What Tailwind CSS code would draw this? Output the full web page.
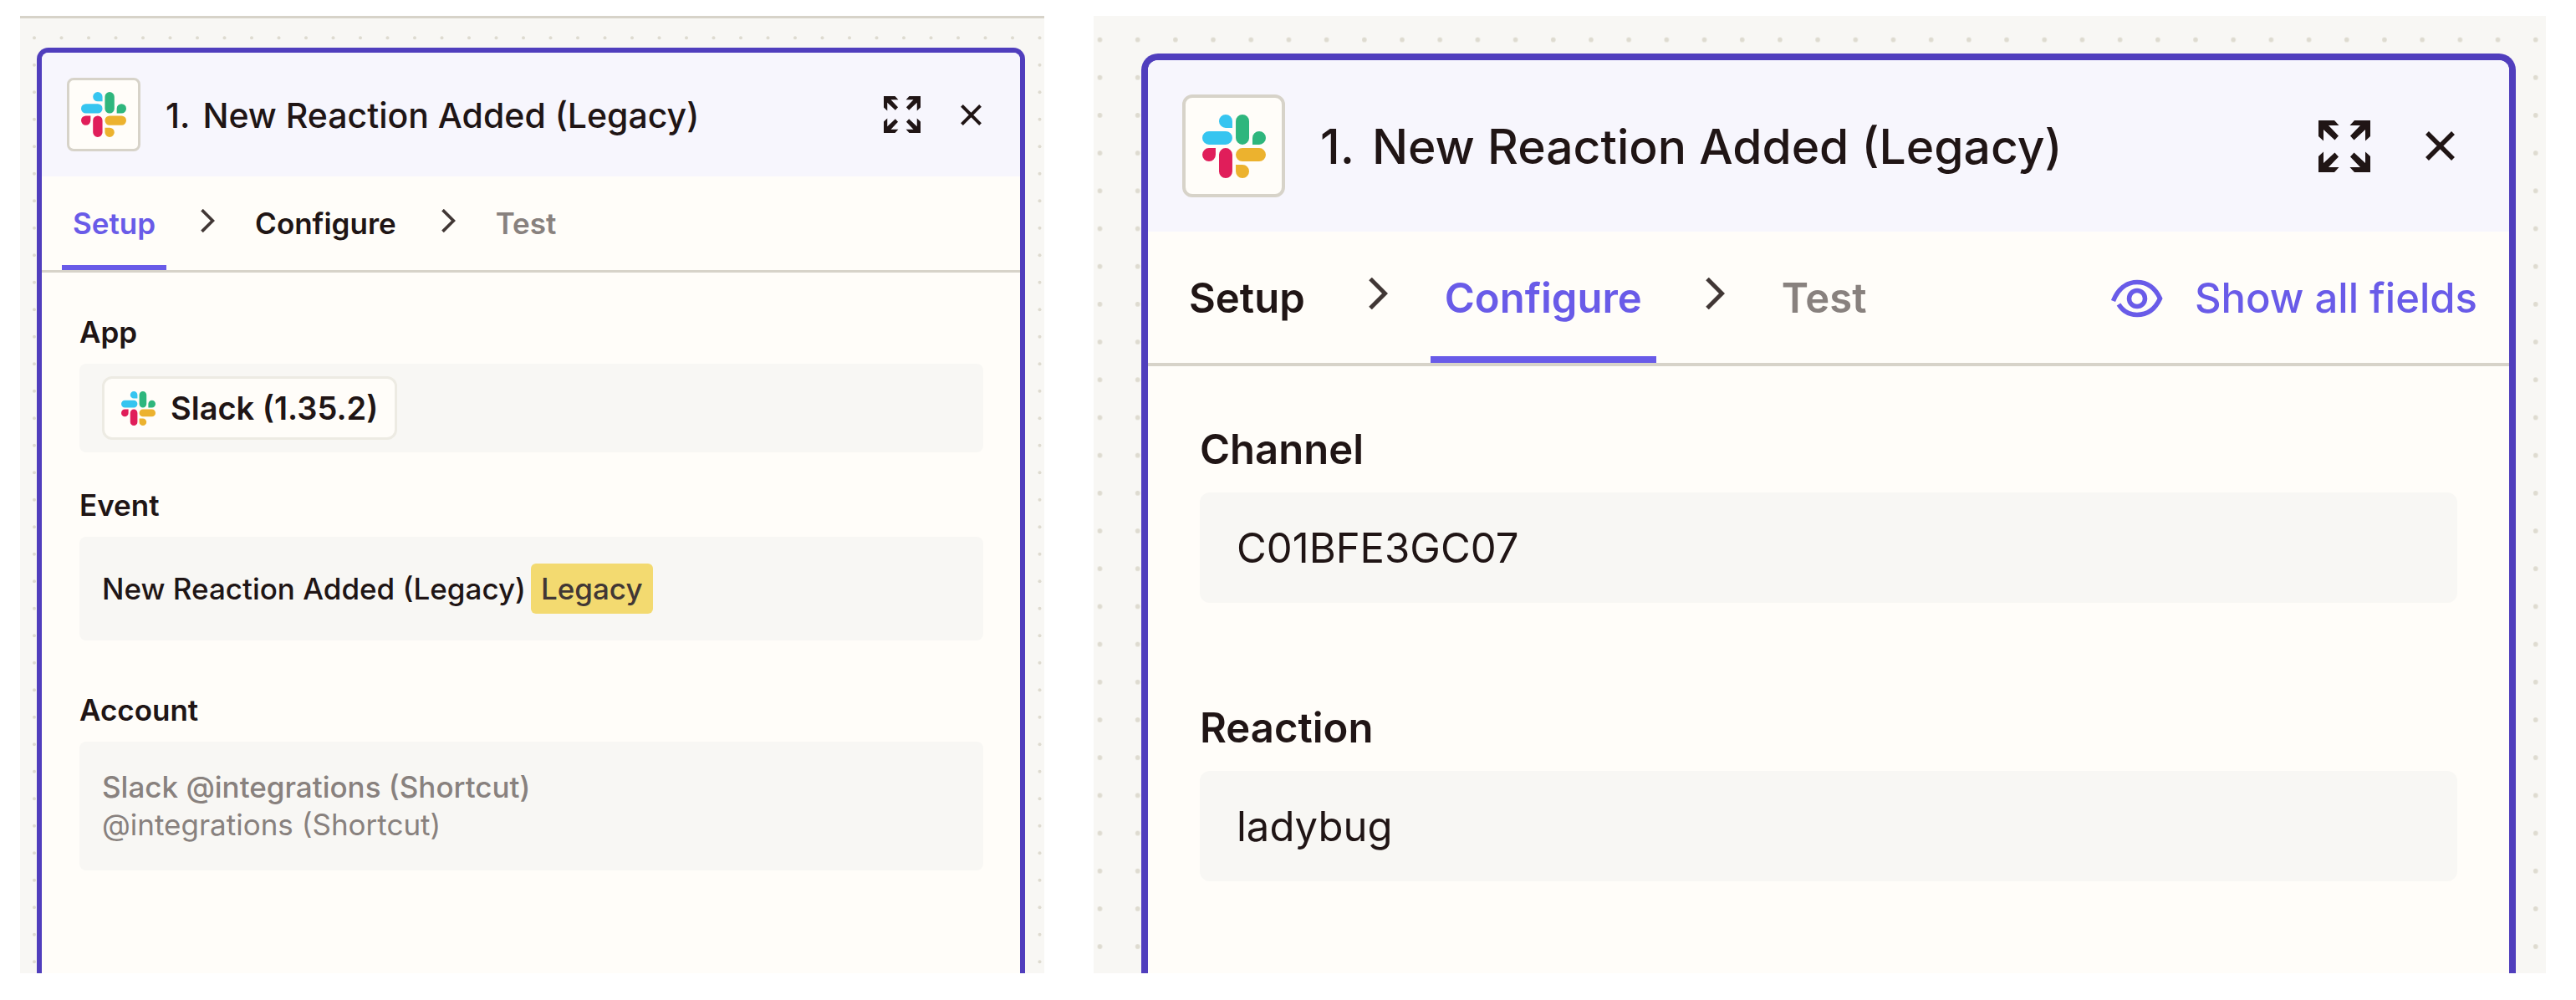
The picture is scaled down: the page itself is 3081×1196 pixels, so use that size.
<!DOCTYPE html>
<html lang="en">
<head>
<meta charset="utf-8">
<meta name="viewport" content="width=device-width, initial-scale=1">
<title>Zap step setup</title>
<script src="https://cdn.jsdelivr.net/npm/@tailwindcss/browser@4"></script>
</head>
<body class="bg-white font-['Inter',sans-serif] text-[#201515] antialiased">
<svg class="hidden" aria-hidden="true">
  <symbol id="slack" viewBox="0 0 24 24">
    <path fill="#e01e5a" d="M5.042 15.165a2.528 2.528 0 0 1-2.52 2.523A2.528 2.528 0 0 1 0 15.165a2.527 2.527 0 0 1 2.522-2.52h2.52v2.52zM6.313 15.165a2.527 2.527 0 0 1 2.521-2.52 2.527 2.527 0 0 1 2.521 2.52v6.313A2.528 2.528 0 0 1 8.834 24a2.528 2.528 0 0 1-2.521-2.522v-6.313z"/>
    <path fill="#36c5f0" d="M8.834 5.042a2.528 2.528 0 0 1-2.521-2.52A2.528 2.528 0 0 1 8.834 0a2.528 2.528 0 0 1 2.521 2.522v2.52H8.834zM8.834 6.313a2.528 2.528 0 0 1 2.521 2.521 2.528 2.528 0 0 1-2.521 2.521H2.522A2.528 2.528 0 0 1 0 8.834a2.528 2.528 0 0 1 2.522-2.521h6.312z"/>
    <path fill="#2eb67d" d="M18.956 8.834a2.528 2.528 0 0 1 2.522-2.521A2.528 2.528 0 0 1 24 8.834a2.528 2.528 0 0 1-2.522 2.521h-2.522V8.834zM17.688 8.834a2.528 2.528 0 0 1-2.523 2.521 2.527 2.527 0 0 1-2.52-2.521V2.522A2.527 2.527 0 0 1 15.165 0a2.528 2.528 0 0 1 2.523 2.522v6.312z"/>
    <path fill="#ecb22e" d="M15.165 18.956a2.528 2.528 0 0 1 2.523 2.522A2.528 2.528 0 0 1 15.165 24a2.527 2.527 0 0 1-2.52-2.522v-2.522h2.52zM15.165 17.688a2.527 2.527 0 0 1-2.52-2.523 2.526 2.526 0 0 1 2.52-2.520h6.313A2.527 2.527 0 0 1 24 15.165a2.528 2.528 0 0 1-2.522 2.523h-6.313z"/>
  </symbol>
  <symbol id="expand" viewBox="0 0 62 62">
    <g fill="currentColor">
      <path id="arrow" d="M0 0H19L24.500 6H12L24 18.500L19.500 23.500L6 11V24.500L0 19Z"/>
      <use href="#arrow" transform="matrix(-1 0 0 1 62 0)"/>
      <use href="#arrow" transform="matrix(1 0 0 -1 0 62)"/>
      <use href="#arrow" transform="matrix(-1 0 0 -1 62 62)"/>
    </g>
  </symbol>
  <symbol id="close" viewBox="0 0 35 35">
    <path d="M2 2L33 33M33 2L2 33" fill="none" stroke="currentColor" stroke-width="5.500"/>
  </symbol>
  <symbol id="chevron" viewBox="0 0 23 38">
    <path d="M2 1.500L19.500 19L2 36.500" fill="none" stroke="currentColor" stroke-width="5"/>
  </symbol>
  <symbol id="eye" viewBox="0 0 62 46">
    <g fill="none" stroke="currentColor" stroke-width="5.500">
      <path d="M2.500 26C8 12 18 3.500 31 3.500C44 3.500 53 11 58.500 23C53 35 44 42.500 31 42.500C21 42.500 14 38 9 30"/>
      <circle cx="31" cy="23" r="9.500"/>
    </g>
  </symbol>
</svg>

<main class="grid min-h-screen grid-cols-[minmax(0,1225fr)_minmax(0,1737fr)] gap-[59px] pt-[19px] pr-9 pb-8 pl-6">

  <section class="relative flex flex-col border-t-3 border-[#d7d3c9] bg-[#f8f7f4] pt-[35px] pr-[23px] pl-5" aria-label="Setup step">
    <svg class="absolute inset-0 size-full" aria-hidden="true">
      <pattern id="dots-a" width="65" height="65" x="1" y="7" patternUnits="userSpaceOnUse">
        <g fill="#dedbd0"><circle cx="16" cy="16.250" r="2"/><circle cx="48.500" cy="16.250" r="2"/><circle cx="16" cy="48.750" r="2"/><circle cx="48.500" cy="48.750" r="2"/></g>
      </pattern>
      <rect width="100%" height="100%" fill="url(#dots-a)"/>
    </svg>
    <div class="relative flex grow flex-col overflow-hidden rounded-t-[14px] border-6 border-b-0 border-[#503ebd] bg-[#fffdf9]">
      <header class="flex h-[148px] items-center bg-[#f7f6fd] pr-[46px] pl-[30px]">
        <div class="flex size-[88px] items-center justify-center rounded-lg border-3 border-[#d7d3c9] bg-[#fffdf9]">
          <svg class="size-[54px]"><use href="#slack"/></svg>
        </div>
        <h2 class="ml-[30px] flex grow gap-[15px] pt-0.5 text-[41px] leading-[52px] font-medium"><span>1.</span><span>New Reaction Added (Legacy)</span></h2>
        <button type="button" aria-label="Expand" class="mr-12"><svg class="size-11"><use href="#expand"/></svg></button>
        <button type="button" aria-label="Close"><svg class="size-[25px]"><use href="#close"/></svg></button>
      </header>
      <nav class="flex h-[115px] items-stretch border-b-3 border-[#d7d3c9] pl-6 text-[35px] leading-[45px] font-semibold">
        <button type="button" class="border-b-6 border-[#695be8] px-[13px] pt-1.5 text-[#695be8]">Setup</button>
        <svg class="mt-[39px] ml-[41px] h-7 w-[17px] text-[#413735]"><use href="#chevron"/></svg>
        <button type="button" class="ml-[35px] border-b-6 border-transparent px-[13px] pt-1.5">Configure</button>
        <svg class="mt-[39px] ml-[41px] h-7 w-[17px] text-[#413735]"><use href="#chevron"/></svg>
        <button type="button" class="ml-[35px] border-b-6 border-transparent px-[13px] pt-1.5 text-[#88817e]">Test</button>
      </nav>
      <div class="flex flex-col pt-[49px] pr-11 pl-[45px] text-[35px] leading-[45px]">
        <h3 class="font-semibold">App</h3>
        <div class="mt-[15px] flex h-[106px] items-center rounded-lg bg-[#f8f7f4] pl-[27px]">
          <button type="button" class="flex h-[76px] items-center gap-[18px] rounded-xl border-3 border-[#edebe3] bg-[#fffdf9] px-5 text-[38px] font-semibold"><svg class="size-[41px]"><use href="#slack"/></svg>Slack (1.35.2)</button>
        </div>
        <h3 class="mt-[41px] font-semibold">Event</h3>
        <div class="mt-[15px] flex h-[124px] items-center gap-1.5 rounded-lg bg-[#f8f7f4] pl-[27px] font-medium">
          <span>New Reaction Added (Legacy)</span>
          <span class="flex h-[60px] items-center rounded-md bg-[#f3da70] px-3 text-[#413735]">Legacy</span>
        </div>
        <h3 class="mt-[61px] font-semibold">Account</h3>
        <div class="mt-[15px] rounded-lg bg-[#f8f7f4] px-[27px] py-8 text-[#88817e]">
          <p class="font-medium">Slack @integrations (Shortcut)</p>
          <p>@integrations (Shortcut)</p>
        </div>
      </div>
    </div>
  </section>

  <section class="relative flex flex-col bg-[#f8f7f4] pt-[45px] pr-9 pl-[57px]" aria-label="Configure step">
    <svg class="absolute inset-0 size-full" aria-hidden="true">
      <pattern id="dots-b" width="45.190" height="45.190" x="-15" y="6" patternUnits="userSpaceOnUse">
        <circle cx="22.500" cy="22.500" r="2.800" fill="#dedbd0"/>
      </pattern>
      <rect width="100%" height="100%" fill="url(#dots-b)"/>
    </svg>
    <div class="relative flex grow flex-col overflow-hidden rounded-t-[20px] border-8 border-b-0 border-[#503ebd] bg-[#fffdf9]">
      <header class="flex h-[205px] items-center bg-[#f7f6fd] pr-[65px] pl-[41px]">
        <div class="flex size-[123px] items-center justify-center rounded-xl border-4 border-[#d7d3c9] bg-[#fffdf9]">
          <svg class="size-[76px]"><use href="#slack"/></svg>
        </div>
        <h2 class="ml-[42px] flex grow gap-[21px] pt-0.5 text-[57px] leading-[72px] font-medium"><span>1.</span><span>New Reaction Added (Legacy)</span></h2>
        <button type="button" aria-label="Expand" class="mr-[66px]"><svg class="size-[62px]"><use href="#expand"/></svg></button>
        <button type="button" aria-label="Close"><svg class="size-[35px]"><use href="#close"/></svg></button>
      </header>
      <nav class="flex h-[161px] items-stretch border-b-4 border-[#d7d3c9] pr-[38px] pl-8 text-[49px] leading-[62px] font-semibold">
        <button type="button" class="border-b-8 border-transparent px-[17px] pt-2.5">Setup</button>
        <svg class="mt-[55px] ml-[59px] h-[38px] w-[23px] text-[#413735]"><use href="#chevron"/></svg>
        <button type="button" class="ml-[51px] border-b-8 border-[#695be8] px-[17px] pt-2.5 text-[#695be8]">Configure</button>
        <svg class="mt-[55px] ml-[59px] h-[38px] w-[23px] text-[#413735]"><use href="#chevron"/></svg>
        <button type="button" class="ml-[51px] border-b-8 border-transparent px-[17px] pt-2.5 text-[#88817e]">Test</button>
        <button type="button" class="ml-auto flex items-center gap-[38px] pt-0.5 font-medium text-[#695be8]"><svg class="h-[46px] w-[62px]"><use href="#eye"/></svg>Show all fields</button>
      </nav>
      <form class="flex flex-col px-[62px] pt-[69px] text-[49px] leading-[62px]">
        <label for="channel" class="font-semibold">Channel</label>
        <input id="channel" type="text" readonly value="C01BFE3GC07" class="mt-5 h-[132px] w-full rounded-xl bg-[#f8f7f4] px-11">
        <label for="reaction" class="mt-[119px] font-semibold">Reaction</label>
        <input id="reaction" type="text" readonly value="ladybug" class="mt-5 h-[132px] w-full rounded-xl bg-[#f8f7f4] px-11">
      </form>
    </div>
  </section>
</main>
</body>
</html>
